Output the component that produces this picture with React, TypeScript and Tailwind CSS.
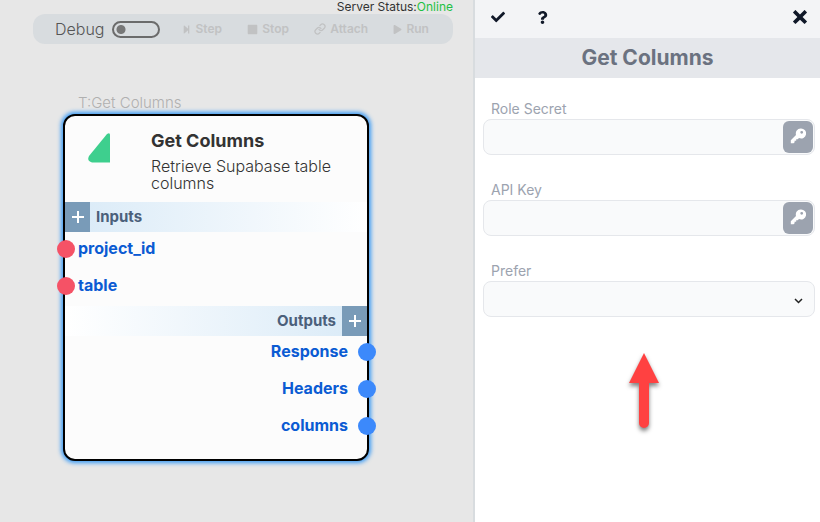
import { useState } from "react";
import type { ReactNode } from "react";
import { FaCheck, FaPlay, FaQuestion, FaStepForward, FaStop } from "react-icons/fa";
import { ImCross } from "react-icons/im";
import { FiLink } from "react-icons/fi";

function KeyIcon() {
  return (
    <svg width="16" height="16" viewBox="0 0 16 16" fill="currentColor" aria-hidden="true">
      <path
        fillRule="evenodd"
        d="M10.500 0.500A5 5 0 1 1 9 10L7.700 11.300H6.200V12.800H4.600V14.300L3.600 15.200H0.800V12.300L6 6.900A5 5 0 0 1 10.500 0.500ZM11.700 2.900A1.400 1.400 0 1 0 11.700 5.700A1.400 1.400 0 1 0 11.700 2.900Z"
      />
    </svg>
  );
}

function ToolButton({ icon, children }: { icon: ReactNode; children: ReactNode }) {
  return (
    <button type="button" disabled className="flex items-center gap-1 text-xs font-semibold text-[#c1c2c3]">
      {icon}
      {children}
    </button>
  );
}

function DebugToolbar() {
  return (
    <header className="pr-5 pl-[33px]">
      <p className="text-right text-xs leading-[14px] text-[#333]">
        Server Status:<span className="text-[#1fc143]">Online</span>
      </p>
      <div className="flex h-[30px] items-center rounded-xl bg-[#d8dcdf] pr-6 pl-[22px]">
        <label className="flex items-center gap-2 text-base leading-5 font-light text-[#555]">
          Debug
          <input
            type="checkbox"
            className="h-[17px] w-12 appearance-none rounded-full border-2 border-[#6b6b6b] bg-[radial-gradient(circle_at_7px_50%,#777_4px,transparent_5px)]"
          />
        </label>
        <div className="ml-[22px] flex flex-1 items-center justify-between">
          <ToolButton icon={<FaStepForward size={9} />}>Step</ToolButton>
          <ToolButton icon={<FaStop size={11} />}>Stop</ToolButton>
          <ToolButton icon={<FiLink size={12} strokeWidth={2.5} />}>Attach</ToolButton>
          <ToolButton icon={<FaPlay size={9} />}>Run</ToolButton>
        </div>
      </div>
    </header>
  );
}

function AddButton({ label }: { label: string }) {
  return (
    <button type="button" aria-label={label} className="flex h-full w-[25px] items-center justify-center bg-[#799bb8] text-white">
      <svg width="12" height="12" viewBox="0 0 12 12" stroke="currentColor" strokeWidth="2">
        <path d="M6 0V12M0 6H12" />
      </svg>
    </button>
  );
}

function Node() {
  return (
    <section className="absolute top-[94px] left-[63px] w-[306px]">
      <p className="h-5 pl-[15px] text-[15px] leading-[18px] font-light text-[#b0b0b0]">T:Get Columns</p>
      <div className="rounded-xl border-2 border-black bg-[#fcfcfc] pb-3 shadow-[0_0_4px_2px_#3b9bf5]">
        <div className="flex h-[86px] pt-[15px] pl-[23px]">
          <svg width="24" height="30" viewBox="0 0 24 30" className="mt-0.5 shrink-0">
            <path d="M19 1Q22 -1 22 2V29.500H4Q-1.500 28 1 23Z" fill="#3ecf8e" />
          </svg>
          <div className="ml-[39px] text-[#333]">
            <h2 className="text-lg leading-5 font-bold">Get Columns</h2>
            <p className="mt-[7px] text-base leading-[17px] font-light">Retrieve Supabase table columns</p>
          </div>
        </div>
        <div className="flex h-[30px] items-center gap-1.5 bg-linear-to-r from-[#d9eaf7] to-white">
          <AddButton label="Add input" />
          <h3 className="text-[15px] leading-5 font-bold text-[#4b607b]">Inputs</h3>
        </div>
        <ul className="text-base leading-4 font-bold text-[#0b5bd3]">
          {["project_id", "table"].map((name) => (
            <li key={name} className="-ml-2 flex h-[37px] gap-[3px] pt-2">
              <span className="size-[18px] rounded-full bg-[#f55266]" />
              {name}
            </li>
          ))}
        </ul>
        <div className="flex h-[30px] items-center justify-end gap-1.5 bg-linear-to-l from-[#d9eaf7] to-white">
          <h3 className="text-[15px] leading-5 font-bold text-[#4b607b]">Outputs</h3>
          <AddButton label="Add output" />
        </div>
        <ul className="text-base leading-4 font-bold text-[#0b5bd3]">
          {["Response", "Headers", "columns"].map((name) => (
            <li key={name} className="-mr-[9px] flex h-[37px] justify-end gap-2.5 pt-[7px]">
              {name}
              <span className="size-[18px] rounded-full bg-[#3c89fb]" />
            </li>
          ))}
        </ul>
      </div>
    </section>
  );
}

function SecretField({ id, label }: { id: string; label: string }) {
  return (
    <div>
      <label htmlFor={id} className="block pl-2 text-sm leading-5 text-[#9ca3af]">{label}</label>
      <div className="flex h-9 rounded-lg border border-gray-200 bg-gray-50 p-px">
        <input id={id} type="text" className="min-w-0 flex-1 bg-transparent px-2 text-sm outline-none" />
        <button type="button" aria-label={"Choose " + label} className="flex w-[30px] justify-center rounded-md bg-[#9ca3af] pt-[7px] text-white">
          <KeyIcon />
        </button>
      </div>
    </div>
  );
}

function PropertiesPanel() {
  const [prefer, setPrefer] = useState("");
  return (
    <aside className="w-[347px] shrink-0 border-l-2 border-[#d8dcdf] bg-white">
      <div className="flex h-[38px] items-center bg-gray-100 px-4 pb-1 text-gray-900">
        <button type="button" aria-label="Apply"><FaCheck size={14} /></button>
        <button type="button" aria-label="Help" className="ml-[31px]"><FaQuestion size={13} /></button>
        <button type="button" aria-label="Close" className="-mr-[3px] ml-auto"><ImCross size={14} /></button>
      </div>
      <h1 className="h-10 bg-gray-200 text-center text-[21px] leading-10 font-bold text-[#6b7280]">Get Columns</h1>
      <form className="flex flex-col gap-[25px] pt-[21px] pr-[5px] pl-2">
        <SecretField id="role-secret" label="Role Secret" />
        <SecretField id="api-key" label="API Key" />
        <div>
          <label htmlFor="prefer" className="block pl-2 text-sm leading-5 text-[#9ca3af]">Prefer</label>
          <div className="relative">
            <select
              id="prefer"
              value={prefer}
              onChange={(event) => setPrefer(event.target.value)}
              className="h-9 w-full appearance-none rounded-lg border border-gray-200 bg-gray-50 px-2 text-sm"
            >
              <option value=""></option>
            </select>
            <svg width="9" height="6" viewBox="0 0 9 6" fill="none" stroke="#222" strokeWidth="1.5" className="pointer-events-none absolute top-[17px] right-3">
              <path d="M1 1L4.500 4.500L8 1" />
            </svg>
          </div>
        </div>
      </form>
      <svg width="40" height="88" viewBox="0 0 40 88" className="mx-auto mt-8 block -translate-x-1 drop-shadow-[0_3px_2px_rgba(0,0,0,0.5)]">
        <path d="M20 4L35 34H25V74A5 5 0 0 1 15 74V34H5Z" fill="#ff4141" />
      </svg>
    </aside>
  );
}

export default function App() {
  return (
    <div className="flex min-h-screen bg-[#e7e7e7] font-[Inter,sans-serif]">
      <main className="relative min-w-0 flex-1">
        <DebugToolbar />
        <Node />
      </main>
      <PropertiesPanel />
    </div>
  );
}
